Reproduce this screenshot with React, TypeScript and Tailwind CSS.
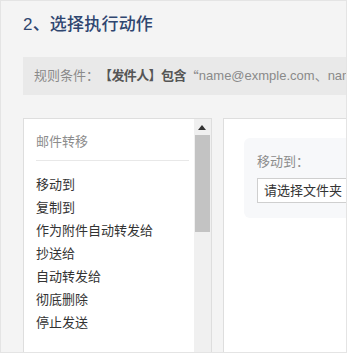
import React from 'react'

const font = 'font-["Liberation_Sans","Noto_Sans_CJK_SC",sans-serif]'

const actions = ['移动到', '复制到', '作为附件自动转发给', '抄送给', '自动转发给', '彻底删除', '停止发送']

export default function App() {
  return (
    <div className={`${font} w-[347px] h-[353px] overflow-hidden border border-[#e4e4e4] bg-[#f4f4f4]`}>
      <div className="w-[420px] pl-[22px] pt-[12px]">
        {/* 标题 */}
        <h2 className="text-[17px] leading-[24px] font-medium text-[#2f4670] tracking-[0.2px]">2、选择执行动作</h2>

        {/* 规则条件 */}
        <div className="mt-[20px] h-[38px] bg-[#e9e9e9] pl-[11px] flex items-center text-[13px] text-[#8a8a8a] whitespace-nowrap">
          <span>规则条件：</span>
          <span className="font-bold text-[#555] tracking-[-0.6px]">【发件人】包含</span>
          <span className='font-["Noto_Sans_CJK_SC",sans-serif]'>“</span>
          <span>name@exmple.com、name2@exmple.com”</span>
        </div>

        <div className="mt-[23px] flex gap-[11px]">
          {/* 左侧动作列表 */}
          <div className="w-[191px] h-[240px] border border-[#dedede] bg-white flex">
            <div className="flex-1 pl-[12px] pr-[5px] pt-[13px]">
              <div className="text-[13px] leading-[20px] text-[#8c8c8c]">邮件转移</div>
              <div className="mt-[8px] border-t border-[#e8e8e8]" />
              <ul className="mt-[12px] text-[13px] leading-[23px] text-[#333]">
                {actions.map(a => (
                  <li key={a}>{a}</li>
                ))}
              </ul>
            </div>
            {/* 滚动条 */}
            <div className="w-[17px] bg-[#f0f0f0] flex flex-col items-center">
              <div className="h-[16px] flex items-center justify-center">
                <svg width="8" height="5" viewBox="0 0 8 5">
                  <path d="M0 5 L4 0 L8 5 Z" fill="#333" />
                </svg>
              </div>
              <div className="w-[15px] h-[97px] bg-[#c3c3c3]" />
            </div>
          </div>

          {/* 右侧配置 */}
          <div className="w-[200px] h-[240px] border border-[#dedede] bg-white pl-[20px] pt-[19px]">
            <div className="h-[80px] rounded-md bg-[#f7f8fa] pl-[13px] pt-[14px]">
              <div className="text-[13px] leading-[20px] text-[#8c8c8c]">移动到：</div>
              <div className="mt-[6px] h-[25px] w-[160px] border border-[#cfcfcf] bg-white pl-[6px] flex items-center text-[13px] text-[#333]">
                请选择文件夹
              </div>
            </div>
          </div>
        </div>
      </div>
    </div>
  )
}
